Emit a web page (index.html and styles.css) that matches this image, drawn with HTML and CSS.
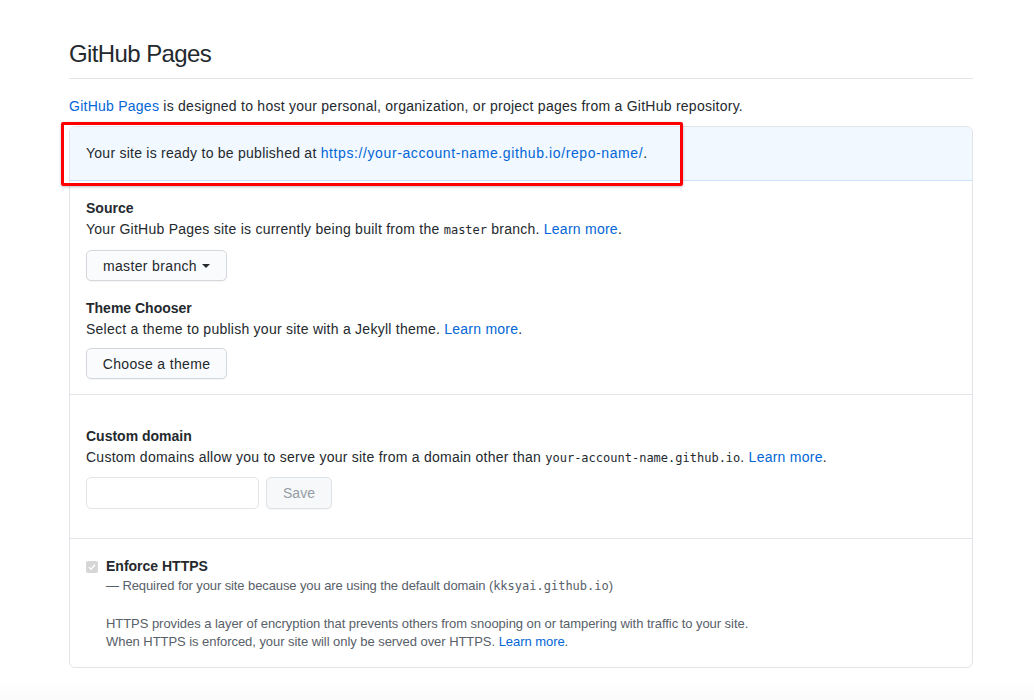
FILE: index.html
```html
<!DOCTYPE html>
<html lang="en">
<head>
<meta charset="utf-8">
<title>GitHub Pages</title>
<link rel="stylesheet" href="styles.css">
</head>
<body>
<div class="page">
  <h2 class="title">GitHub Pages</h2>
  <p class="intro"><a href="#">GitHub Pages</a> is designed to host your personal, organization, or project pages from a GitHub repository.</p>
  <div class="box-wrap">
    <div class="box">
      <div class="flash">Your site is ready to be published at <a class="flash-link" href="#">https://your-account-name.github.io/repo-name/</a>.</div>
      <div class="section">
        <div class="label">Source</div>
        <div class="desc">Your GitHub Pages site is currently being built from the <code>master</code> branch. <a href="#">Learn more</a>.</div>
        <button class="btn btn-select">master branch <span class="caret"></span></button>
        <div class="label label-gap">Theme Chooser</div>
        <div class="desc desc-tight">Select a theme to publish your site with a Jekyll theme. <a href="#">Learn more</a>.</div>
        <button class="btn btn-theme">Choose a theme</button>
      </div>
      <div class="section section-domain">
        <div class="label">Custom domain</div>
        <div class="desc desc-domain">Custom domains allow you to serve your site from a domain other than <code>your-account-name.github.io</code>. <a href="#">Learn more</a>.</div>
        <div class="domain-row">
          <input class="input" type="text">
          <button class="btn btn-save" disabled>Save</button>
        </div>
      </div>
      <div class="section section-https">
        <div class="check-row">
          <span class="checkbox"><svg width="12" height="12" viewBox="0 0 12 12"><path d="M3 6.2l2 2 4-4.4" fill="none" stroke="#fff" stroke-width="1.4"/></svg></span>
          <span class="check-label">Enforce HTTPS</span>
        </div>
        <div class="note">— Required for your site because you are using the default domain (<code>kksyai.github.io</code>)</div>
        <p class="note-p">HTTPS provides a layer of encryption that prevents others from snooping on or tampering with traffic to your site.<br>When HTTPS is enforced, your site will only be served over HTTPS. <a href="#">Learn more</a>.</p>
      </div>
    </div>
    <div class="highlight"></div>
  </div>
</div>
<div class="bottom-fade"></div>
</body>
</html>
```

FILE: styles.css
```css
html, body {
  margin: 0;
  padding: 0;
  background: #fff;
}
body {
  font-family: "Liberation Sans", Arial, sans-serif;
  font-size: 14px;
  line-height: 21px;
  color: #24292e;
  letter-spacing: 0.25px;
}
a {
  color: #0366d6;
  text-decoration: none;
}
code {
  font-family: "DejaVu Sans Mono", "Liberation Mono", monospace;
  font-size: 12px;
  line-height: 1;
  letter-spacing: 0;
}
.page {
  width: 904px;
  margin-left: 69px;
  padding-top: 38px;
}
.title {
  margin: 0;
  font-size: 24px;
  font-weight: 400;
  line-height: 32px;
  letter-spacing: -0.6px;
  padding-bottom: 8px;
  border-bottom: 1px solid #e1e4e8;
}
.intro {
  margin: 17px 0 9px;
}
.box-wrap {
  position: relative;
}
.box {
  border: 1px solid #e1e4e8;
  border-radius: 6px;
  overflow: hidden;
}
.flash {
  background: #f1f8ff;
  border-bottom: 1px solid #c8e1ff;
  padding: 16px 16px;
  line-height: 21px;
}
.flash-link {
  letter-spacing: 0.6px;
}
.highlight {
  position: absolute;
  left: -8px;
  top: -4px;
  width: 616px;
  height: 58px;
  border: 3px solid #ff0000;
  border-radius: 2px;
  box-shadow: 0 1px 3px rgba(0,0,0,0.25);
}
.section {
  padding: 17px 16px 15px;
  border-bottom: 1px solid #e1e4e8;
}
.label {
  font-weight: 700;
  letter-spacing: 0;
}
.label-gap {
  margin-top: 17px;
}
.desc {
  margin-bottom: 10px;
}
.desc-tight {
  margin-bottom: 8px;
}
.desc-domain {
  margin-bottom: 9px;
}
.btn {
  display: flex;
  align-items: center;
  gap: 5px;
  height: 31px;
  box-sizing: border-box;
  padding: 0;
  font-family: inherit;
  font-size: 14px;
  letter-spacing: 0.35px;
  white-space: nowrap;
  color: #24292e;
  background: #fafbfc;
  border: 1px solid #d4d7db;
  border-radius: 5px;
  box-shadow: 0 1px 0 rgba(27,31,35,0.04);
}
.btn-select, .btn-theme {
  width: 141px;
  justify-content: center;
}
.caret {
  display: inline-block;
  width: 0;
  height: 0;
  border-left: 4px solid transparent;
  border-right: 4px solid transparent;
  border-top: 4px solid #24292e;
}
.section-domain {
  padding-top: 31px;
  padding-bottom: 29px;
}
.domain-row {
  display: flex;
  gap: 7px;
}
.input {
  width: 173px;
  height: 32px;
  box-sizing: border-box;
  border: 1px solid #e1e4e8;
  border-radius: 5px;
  background: #fff;
  margin: 0;
}
.btn-save {
  height: 32px;
  width: 66px;
  justify-content: center;
  letter-spacing: 0;
  color: #959da5;
  background: #f6f8fa;
  border-color: #dfe2e5;
}
.section-https {
  border-bottom: none;
  padding-top: 17px;
  padding-bottom: 16px;
}
.check-row {
  display: flex;
  align-items: center;
  gap: 8px;
}
.checkbox {
  display: inline-flex;
  width: 12px;
  height: 12px;
  background: #d6d6d6;
  border-radius: 2px;
}
.check-label {
  font-weight: 700;
  letter-spacing: 0;
}
.note {
  margin-left: 20px;
  font-size: 13px;
  line-height: 18px;
  letter-spacing: -0.1px;
  color: #586069;
}
.note-p {
  margin: 20px 0 0 20px;
  font-size: 13px;
  line-height: 18px;
  letter-spacing: -0.05px;
  color: #586069;
}
.bottom-fade {
  height: 32px;
  margin-top: 12px;
  background: linear-gradient(#ffffff, #f7f7f7);
}
```
